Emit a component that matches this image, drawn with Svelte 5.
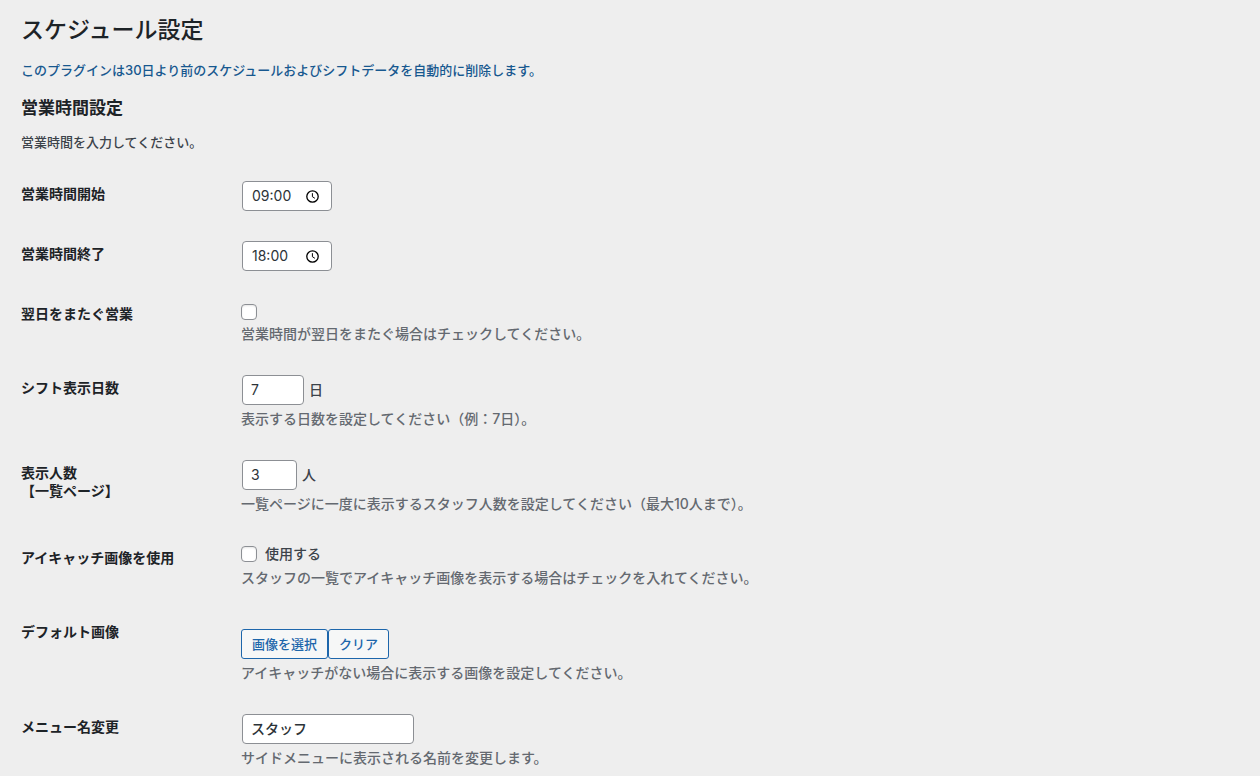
<script lang="ts">
  let openTime = $state('09:00')
  let closeTime = $state('18:00')
  let overnight = $state(false)
  let shiftDays = $state(7)
  let staffCount = $state(3)
  let useThumbnail = $state(false)
  let menuName = $state('スタッフ')
</script>

{#snippet timeField(id: string, value: string, onchange: (v: string) => void)}
  <div class="time-field">
    <input
      {id}
      type="text"
      inputmode="numeric"
      {value}
      onchange={(e) => onchange(e.currentTarget.value)}
    />
    <button type="button" class="time-picker" aria-label="時刻を選択">
      <svg viewBox="0 0 14 14" width="14" height="14" fill="none" stroke="currentColor">
        <circle cx="7.5" cy="7.5" r="5.7" stroke-width="1.3" />
        <path d="M7.4 4.2v3.5l2.5 1.6" stroke-width="1" />
      </svg>
    </button>
  </div>
{/snippet}

<main class="wrap">
  <h1>スケジュール設定</h1>
  <p class="notice">このプラグインは30日より前のスケジュールおよびシフトデータを自動的に削除します。</p>

  <form onsubmit={(e) => e.preventDefault()}>
    <h2>営業時間設定</h2>
    <p class="intro">営業時間を入力してください。</p>

    <div class="row">
      <label class="title" for="open-time">営業時間開始</label>
      <div class="field">
        {@render timeField('open-time', openTime, (v) => (openTime = v))}
      </div>
    </div>

    <div class="row">
      <label class="title" for="close-time">営業時間終了</label>
      <div class="field">
        {@render timeField('close-time', closeTime, (v) => (closeTime = v))}
      </div>
    </div>

    <div class="row">
      <label class="title" for="overnight">翌日をまたぐ営業</label>
      <div class="field">
        <div class="check-line bare">
          <input id="overnight" type="checkbox" bind:checked={overnight} />
        </div>
        <p class="description">営業時間が翌日をまたぐ場合はチェックしてください。</p>
      </div>
    </div>

    <div class="row">
      <label class="title" for="shift-days">シフト表示日数</label>
      <div class="field">
        <div class="input-line">
          <input id="shift-days" class="days" type="number" min="1" bind:value={shiftDays} />
          <span>日</span>
        </div>
        <p class="description">表示する日数を設定してください（例：7日）。</p>
      </div>
    </div>

    <div class="row">
      <label class="title" for="staff-count">表示人数<br />【一覧ページ】</label>
      <div class="field">
        <div class="input-line">
          <input id="staff-count" class="count" type="number" min="1" max="10" bind:value={staffCount} />
          <span>人</span>
        </div>
        <p class="description">一覧ページに一度に表示するスタッフ人数を設定してください（最大10人まで）。</p>
      </div>
    </div>

    <div class="row">
      <span class="title">アイキャッチ画像を使用</span>
      <div class="field">
        <label class="check-line">
          <input type="checkbox" bind:checked={useThumbnail} />
          <span>使用する</span>
        </label>
        <p class="description">スタッフの一覧でアイキャッチ画像を表示する場合はチェックを入れてください。</p>
      </div>
    </div>

    <div class="row">
      <span class="title">デフォルト画像</span>
      <div class="field">
        <div class="buttons">
          <button type="button" class="button">画像を選択</button>
          <button type="button" class="button">クリア</button>
        </div>
        <p class="description">アイキャッチがない場合に表示する画像を設定してください。</p>
      </div>
    </div>

    <div class="row">
      <label class="title" for="menu-name">メニュー名変更</label>
      <div class="field">
        <div class="input-line">
          <input id="menu-name" class="name" type="text" bind:value={menuName} />
        </div>
        <p class="description">サイドメニューに表示される名前を変更します。</p>
      </div>
    </div>
  </form>
</main>

<style>
  :global(body) {
    margin: 0;
    background: #eee;
    overflow: hidden;
  }

  .wrap {
    padding: 15px 20px 0 21px;
    color: #3c434a;
    font-family: Inter, 'Noto Sans CJK JP', sans-serif;
    font-size: 13px;
    font-weight: 500;
    line-height: 20px;
  }

  h1,
  h2,
  p {
    margin: 0;
  }

  h1 {
    color: #1d2327;
    font-size: 23px;
    font-weight: 500;
    line-height: 30px;
  }

  .notice {
    margin-top: 15px;
    color: #17588f;
  }

  h2 {
    margin-top: 17px;
    color: #1d2327;
    font-size: 17px;
    font-weight: 600;
    line-height: 22px;
  }

  .intro {
    margin: 13px 0 14px;
  }

  .row {
    display: flex;
    font-size: 14px;
  }

  .title {
    flex: 0 0 200px;
    padding: 19px 10px 20px 0;
    color: #1d2327;
    font-weight: 600;
    line-height: 18px;
  }

  .field {
    flex: 1;
    padding: 15px 10px;
  }

  .description {
    margin: 3px 0 1px;
    color: #646970;
    line-height: 21px;
  }

  input,
  button {
    box-sizing: border-box;
    margin: 0;
    font-family: inherit;
    font-weight: inherit;
  }

  .input-line {
    display: flex;
    align-items: center;
    gap: 5px;
    padding-left: 1px;
  }

  .input-line input,
  .time-field {
    box-sizing: border-box;
    height: 30px;
    padding: 0 8px 2px;
    border: 1px solid #8c8f94;
    border-radius: 4px;
    background: #fff;
    color: #2c3338;
    font-size: 14px;
    font-weight: 400;
  }

  .input-line span {
    padding-bottom: 1px;
  }

  .days {
    width: 62px;
  }

  .count {
    width: 55px;
  }

  .input-line .name {
    width: 172px;
    font-weight: 500;
  }

  .time-field {
    display: flex;
    align-items: center;
    justify-content: space-between;
    width: 90px;
    margin-left: 1px;
    padding: 0 12px 0 9px;
  }

  .time-field input {
    width: 48px;
    padding: 0 0 1px;
    border: 0;
    outline: 0;
    background: none;
    color: inherit;
    font-size: 14px;
  }

  .time-picker {
    display: flex;
    padding: 0;
    border: 0;
    background: none;
    color: #000;
    cursor: pointer;
  }

  input[type='checkbox'] {
    appearance: none;
    width: 16px;
    height: 16px;
    border: 1px solid #8c8f94;
    border-radius: 4px;
    background: #fff;
    box-shadow: inset 0 1px 2px rgba(0, 0, 0, 0.1);
  }

  input[type='checkbox']:checked {
    background: #2271b1;
  }

  .check-line {
    display: flex;
    align-items: center;
    box-sizing: border-box;
    gap: 8px;
    height: 19px;
    padding-bottom: 1px;
  }

  .check-line.bare {
    align-items: flex-end;
    padding-bottom: 0;
  }

  .buttons {
    display: flex;
    padding-top: 10px;
  }

  .button {
    height: 30px;
    padding: 0 10px 2px;
    border: 1px solid #1d66ab;
    border-radius: 3px;
    background: #f6f7f7;
    color: #1d66ab;
    font-size: 13px;
    cursor: pointer;
  }
</style>
